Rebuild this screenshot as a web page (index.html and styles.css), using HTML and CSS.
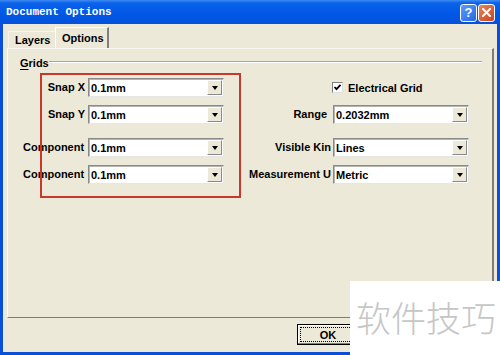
FILE: index.html
```html
<!DOCTYPE html>
<html lang="en">
<head>
  <meta charset="UTF-8" />
  <meta name="viewport" content="width=device-width, initial-scale=1.0"/>
  <title>Document Options</title>
  <link rel="stylesheet" href="styles.css">
</head>
<body>
  <div class="window">
    <div class="titlebar">
      <span class="title">Document Options</span>
      <div class="caption-btns">
        <span class="cap-btn help">?</span>
        <span class="cap-btn close">
          <svg width="9" height="9" viewBox="0 0 9 9"><path d="M1 1L8 8M8 1L1 8" stroke="#fff" stroke-width="2" stroke-linecap="square"/></svg>
        </span>
      </div>
    </div>

    <div class="client">
      <div class="tabs">
        <div class="tab">Layers</div>
        <div class="tab active">Options</div>
      </div>

      <div class="page">
        <div class="group-head">
          <span><u>G</u>rids</span>
          <span class="rule"></span>
        </div>

        <div class="fields">
          <span class="lbl">Snap X</span>
          <div class="combo"><span class="value">0.1mm</span><span class="drop"></span></div>
          <span class="lbl right"></span>
          <label class="check-row">
            <span class="checkbox">
              <svg width="9" height="9" viewBox="0 0 9 9"><path d="M1.5 4L3.5 6.2L7.5 1.8" fill="none" stroke="#000" stroke-width="1.8"/></svg>
            </span>
            Electrical Grid
          </label>

          <span class="lbl">Snap Y</span>
          <div class="combo"><span class="value">0.1mm</span><span class="drop"></span></div>
          <span class="lbl right">Range</span>
          <div class="combo"><span class="value">0.2032mm</span><span class="drop"></span></div>

          <span class="lbl lead">Component</span>
          <div class="combo"><span class="value">0.1mm</span><span class="drop"></span></div>
          <span class="lbl right shift">Visible Kin</span>
          <div class="combo"><span class="value">Lines</span><span class="drop"></span></div>

          <span class="lbl lead">Component</span>
          <div class="combo"><span class="value">0.1mm</span><span class="drop"></span></div>
          <span class="lbl right lead">Measurement U</span>
          <div class="combo"><span class="value">Metric</span><span class="drop"></span></div>
        </div>
      </div>

      <div class="footer">
        <button class="btn default"><span class="focus">OK</span></button>
      </div>
    </div>

    <div class="mark"></div>
    <div class="watermark">软件技巧</div>
  </div>
</body>
</html>
```

FILE: styles.css
```css
* {
  margin: 0;
  padding: 0;
  box-sizing: border-box;
}

body {
  font-family: 'Liberation Sans', Arial, sans-serif;
  font-size: 11px;
  font-weight: bold;
  color: #000;
  background: #fff;
}

.window {
  position: relative;
  width: 500px;
  height: 355px;
  display: flex;
  flex-direction: column;
  background: #0a4fd6;
  overflow: hidden;
}

/* title bar */
.titlebar {
  height: 24px;
  display: flex;
  align-items: center;
  justify-content: space-between;
  padding: 0 5px 0 6px;
  background: linear-gradient(#3f8cf3 0, #0b62ea 3px, #0058e6 55%, #0452dc 100%);
}

.title {
  font-family: 'Liberation Mono', monospace;
  font-size: 11px;
  font-weight: bold;
  color: #fff;
}

.caption-btns {
  display: flex;
  gap: 1px;
  margin-top: 1px;
}

.cap-btn {
  width: 17px;
  height: 18px;
  border: 1px solid #fff;
  border-radius: 3px;
  display: flex;
  align-items: center;
  justify-content: center;
  color: #fff;
  font-size: 13px;
  font-weight: bold;
}

.help {
  background: linear-gradient(135deg, #5b9dfc, #2466e6);
}

.close {
  background: linear-gradient(135deg, #e9835f, #c8441d);
}

/* client area */
.client {
  flex: 1;
  margin: 0 3px 3px 3px;
  background: #ece9d8;
  display: flex;
  flex-direction: column;
  padding-top: 3px;
}

.tabs {
  height: 21px;
  display: flex;
  align-items: flex-end;
  padding-left: 5px;
}

.tab {
  height: 17px;
  width: 47px;
  display: flex;
  align-items: center;
  padding-left: 6px;
  border-top: 1px solid #f6f5ee;
  border-left: 1px solid #f6f5ee;
}

.tab.active {
  height: 21px;
  width: 54px;
  padding-bottom: 1px;
  border-top: 1px solid #fff;
  border-left: 1px solid #fff;
  border-right: 2px solid #808080;
}

.page {
  height: 270px;
  margin: 0 3px 0 4px;
  border: 1px solid;
  border-color: #f8f7f2 #7d7d7d #7d7d7d #fbfbf8;
  border-right-width: 2px;
}

.group-head {
  display: flex;
  align-items: center;
  height: 14px;
  margin: 7px 10px 0 12px;
}

.group-head u {
  text-decoration-thickness: 1px;
  text-underline-offset: 2px;
}

.rule {
  flex: 1;
  border-top: 1px solid #a9a698;
  border-bottom: 1px solid #fff;
  margin-top: -2px;
}

/* field grid */
.fields {
  display: grid;
  grid-template-columns: 65px 136px 109px 136px;
  grid-template-rows: 19px 19px 25px 19px;
  row-gap: 8px;
  align-items: end;
  margin: 8px 0 0 15px;
}

.lbl {
  height: 19px;
  line-height: 19px;
  white-space: nowrap;
  text-align: right;
  padding-right: 3px;
}

.lbl.lead {
  text-align: left;
  padding-right: 0;
}

.lbl.right {
  padding-left: 25px;
  padding-right: 6px;
}

.lbl.shift {
  text-align: left;
  padding-left: 51px;
  padding-right: 0;
}

.combo {
  height: 19px;
  display: flex;
  align-items: stretch;
  background: #fff;
  border: 1px solid;
  border-color: #8a8a8a #e6e6e6 #e6e6e6 #8a8a8a;
  box-shadow: inset 1px 1px 0 #b4b4b4;
}

.value {
  flex: 1;
  line-height: 16px;
  padding-left: 2px;
  padding-top: 1px;
}

.drop {
  width: 15px;
  margin: 1px 1px 1px 0;
  background: #ece9d8;
  border: 1px solid;
  border-color: #fff #8a8a8a #8a8a8a #fff;
  display: flex;
  align-items: center;
  justify-content: center;
}

.drop::after {
  content: "";
  border-left: 3px solid transparent;
  border-right: 3px solid transparent;
  border-top: 4px solid #000;
  margin-top: 1px;
}

.check-row {
  align-self: center;
  display: flex;
  align-items: center;
  gap: 5px;
  margin-left: -1px;
}

.checkbox {
  width: 11px;
  height: 11px;
  background: #fff;
  border: 1px solid;
  border-color: #808080 #e0e0e0 #e0e0e0 #808080;
  display: flex;
  align-items: center;
  justify-content: center;
}

/* buttons */
.footer {
  flex: 1;
  display: flex;
  align-items: flex-start;
  padding: 6px 0 0 294px;
}

.btn {
  width: 62px;
  height: 21px;
  font-family: inherit;
  font-size: 11px;
  font-weight: bold;
  background: #ece9d8;
  display: flex;
  padding: 2px;
  border: 1px solid #000;
  box-shadow: inset -1px -1px 0 #808080, inset 1px 1px 0 #fff;
}

.btn span {
  flex: 1;
  display: flex;
  align-items: center;
  justify-content: center;
}

.btn .focus {
  border: 1px dotted #000;
}

/* overlays */
.mark {
  position: absolute;
  left: 40px;
  top: 73px;
  width: 201px;
  height: 125px;
  border: 2px solid #c9382d;
}

.watermark {
  position: absolute;
  left: 350px;
  top: 281px;
  width: 150px;
  height: 74px;
  background: #fff;
  display: flex;
  align-items: center;
  padding: 0 0 4px 6px;
  font-family: 'Noto Sans CJK SC', sans-serif;
  font-size: 35px;
  font-weight: 300;
  color: #c6c6c6;
  white-space: nowrap;
}
```
